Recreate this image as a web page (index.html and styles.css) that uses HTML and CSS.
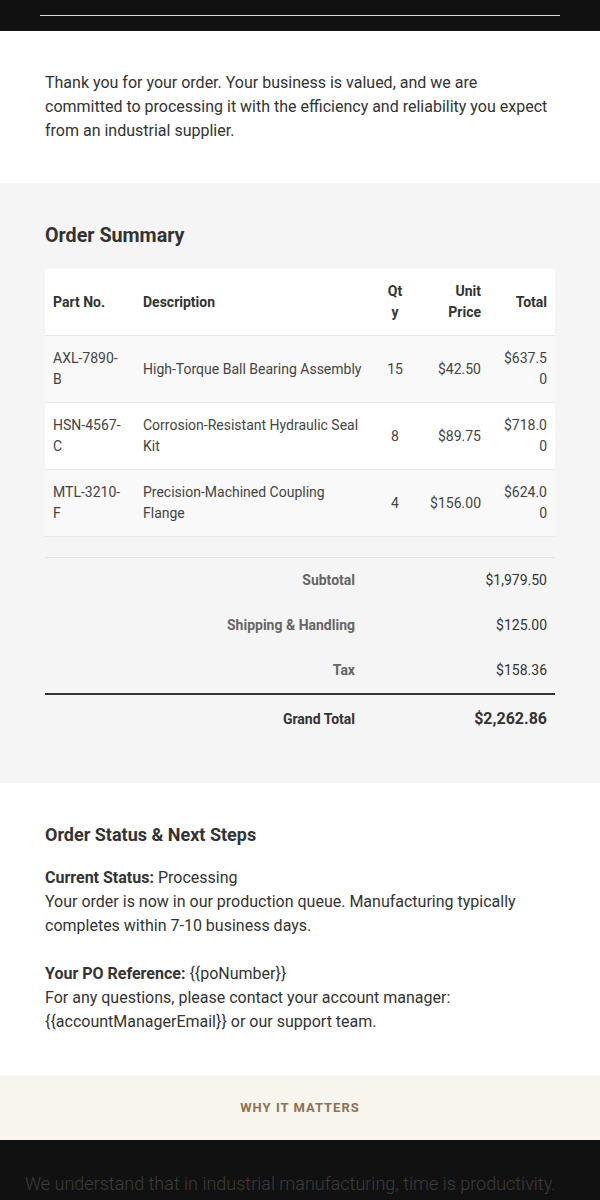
FILE: index.html
```html
<!DOCTYPE html>
<html lang="en">
<head>
    <meta charset="UTF-8" />
    <title>Order Confirmation</title>
    <link rel="stylesheet" href="styles.css">
</head>
<body>
    <header class="topo">
        <div class="topo-linha"></div>
    </header>

    <section class="intro">
        <p>Thank you for your order. Your business is valued, and we are committed to processing it with the efficiency and reliability you expect from an industrial supplier.</p>
    </section>

    <section class="resumo">
        <h2>Order Summary</h2>
        <table class="itens">
            <colgroup>
                <col class="c-part">
                <col class="c-desc">
                <col class="c-qty">
                <col class="c-unit">
                <col class="c-total">
            </colgroup>
            <thead>
                <tr>
                    <th>Part No.</th>
                    <th>Description</th>
                    <th class="centro">Qty</th>
                    <th class="direita">Unit Price</th>
                    <th class="direita">Total</th>
                </tr>
            </thead>
            <tbody>
                <tr>
                    <td class="peca">AXL-7890-B</td>
                    <td>High-Torque Ball Bearing Assembly</td>
                    <td class="centro">15</td>
                    <td class="direita">$42.50</td>
                    <td class="direita">$637.50</td>
                </tr>
                <tr>
                    <td class="peca">HSN-4567-C</td>
                    <td>Corrosion-Resistant Hydraulic Seal Kit</td>
                    <td class="centro">8</td>
                    <td class="direita">$89.75</td>
                    <td class="direita">$718.00</td>
                </tr>
                <tr>
                    <td class="peca">MTL-3210-F</td>
                    <td>Precision-Machined Coupling Flange</td>
                    <td class="centro">4</td>
                    <td class="direita">$156.00</td>
                    <td class="direita">$624.00</td>
                </tr>
            </tbody>
        </table>

        <table class="totais">
            <tr>
                <td class="rotulo">Subtotal</td>
                <td class="valor">$1,979.50</td>
            </tr>
            <tr>
                <td class="rotulo">Shipping &amp; Handling</td>
                <td class="valor">$125.00</td>
            </tr>
            <tr>
                <td class="rotulo">Tax</td>
                <td class="valor">$158.36</td>
            </tr>
            <tr class="geral">
                <td class="rotulo">Grand Total</td>
                <td class="valor">$2,262.86</td>
            </tr>
        </table>
    </section>

    <section class="status">
        <h3>Order Status &amp; Next Steps</h3>
        <p>
            <strong>Current Status:</strong> Processing<br>
            Your order is now in our production queue. Manufacturing typically completes within 7-10 business days.<br><br>
            <strong>Your PO Reference:</strong> {{poNumber}}<br>
            For any questions, please contact your account manager: {{accountManagerEmail}} or our support team.
        </p>
    </section>

    <section class="porque">
        <span>Why it matters</span>
    </section>

    <section class="rodape">
        <p>We understand that in industrial manufacturing, time is productivity. Every order is tracked from our floor to yours.</p>
    </section>
</body>
</html>
```

FILE: styles.css
```css
/* Reset básico */
* {
    box-sizing: border-box;
}

body {
    font-family: Roboto, 'Liberation Sans', Arial, sans-serif;
    margin: 0;
    color: #333;
    background: #fff;
}

.topo {
    background: #111;
    height: 31px;
    padding: 15px 40px 0;
}

.topo-linha {
    height: 1px;
    background: #e6dbcf;
}

.intro {
    padding: 40px 45px;
}

.intro p {
    margin: 0;
    font-size: 16px;
    line-height: 24px;
}

.resumo {
    background: #f5f5f5;
    padding: 41px 45px 40px;
}

.resumo h2 {
    margin: 0 0 21px;
    font-size: 19.7px;
    line-height: 24px;
    color: #333;
}

table {
    width: 100%;
    border-collapse: collapse;
}

.itens {
    table-layout: fixed;
    background: #fff;
    font-size: 14px;
    line-height: 21px;
}

.c-part { width: 90px; }
.c-desc { width: 242px; }
.c-qty { width: 36px; }
.c-unit { width: 76px; }
.c-total { width: 66px; }

.itens th,
.itens td {
    padding: 12px 8px;
    text-align: left;
    overflow-wrap: anywhere;
}

.itens th {
    font-weight: 700;
    color: #333;
    border-bottom: 1px solid #e8e8e8;
}

.itens td {
    color: #444;
    border-bottom: 1px solid #e8e8e8;
}

.itens td.peca {
    padding-right: 11px;
}

.itens tbody tr:nth-child(odd) {
    background: #f9f9f9;
}

.itens .centro {
    text-align: center;
}

.itens .direita {
    text-align: right;
}

.totais {
    margin-top: 20px;
    border-top: 1px solid #e5e5e5;
    font-size: 14px;
    line-height: 21px;
}

.totais td {
    padding: 12px 8px;
    text-align: right;
}

.totais .rotulo {
    width: 318px;
    font-weight: 700;
    color: #666;
}

.totais .valor {
    color: #333;
}

.totais .geral td {
    border-top: 2px solid #333;
    color: #333;
    line-height: 24px;
}

.totais .geral .valor {
    font-size: 16px;
    font-weight: 700;
}

.status {
    padding: 41px 45px;
}

.status h3 {
    margin: 0 0 20px;
    font-size: 18px;
    line-height: 22px;
}

.status p {
    margin: 0;
    font-size: 16px;
    line-height: 24px;
}

.porque {
    background: #f8f4ee;
    padding: 22px 20px;
    text-align: center;
}

.porque span {
    font-size: 13px;
    line-height: 20px;
    font-weight: 700;
    letter-spacing: 1px;
    text-transform: uppercase;
    color: #8b7355;
}

.rodape {
    background: #111;
    padding: 29px 25px 40px;
}

.rodape p {
    margin: 0;
    font-size: 18px;
    font-weight: 300;
    line-height: 29px;
    color: #3d3d3d;
}
```
